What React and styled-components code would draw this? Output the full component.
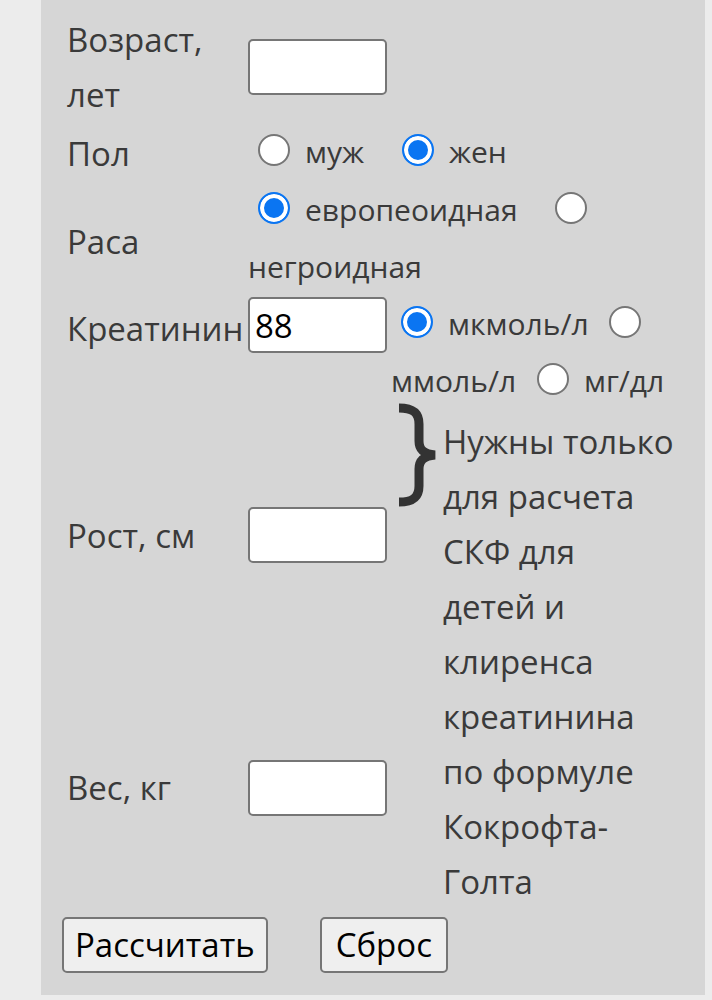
import React from "react";
import styled, { createGlobalStyle } from "styled-components";

const GlobalStyle = createGlobalStyle`
  html, body { margin: 0; padding: 0; background: #ececec; }
  body { font-family: "Open Sans", "Noto Sans", sans-serif; }
`;

const Page = styled.div`
  padding: 0 7px 5px 41px;
`;

const Panel = styled.form`
  background: #d6d6d6;
  padding: 12px 10px 22px 26px;
  color: #3a3a3a;
  font-size: 33px;
  line-height: 55px;
`;

const FormGrid = styled.div`
  display: grid;
  grid-template-columns: 177px 139px 1fr;
  grid-template-rows: auto auto auto auto 1fr 1fr;
  column-gap: 4px;
`;

const Label = styled.div`
  grid-column: 1;
  align-self: ${(p) => (p.$top ? "start" : "center")};
  margin-top: ${(p) => p.$mt || 0}px;
`;

const TextInput = styled.input`
  grid-column: 2;
  align-self: ${(p) => (p.$top ? "start" : "center")};
  margin-top: ${(p) => p.$mt || 0}px;
  box-sizing: border-box;
  width: 139px;
  height: 56px;
  border: 2px solid #767676;
  border-radius: 5px;
  background: #fff;
  padding: 0 5px;
  font-family: "Open Sans", sans-serif;
  font-size: 33px;
  color: #000;
  outline: none;
`;

const RadioCell = styled.div`
  grid-column: ${(p) => p.$col};
  align-self: ${(p) => (p.$top ? "start" : "center")};
  margin-top: ${(p) => p.$mt || 0}px;
  font-size: 30px;
  line-height: 57px;
`;

const Radio = styled.input.attrs({ type: "radio" })`
  appearance: none;
  -webkit-appearance: none;
  box-sizing: border-box;
  width: 32px;
  height: 32px;
  margin: 0 15px 0 ${(p) => p.$ml ?? 13}px;
  vertical-align: -3px;
  border-radius: 50%;
  border: 2px solid #767676;
  background: #fff;
  &:checked {
    border-color: #0a75f2;
    background: #0a75f2;
    box-shadow: inset 0 0 0 4px #fff;
  }
`;

const Note = styled.div`
  grid-column: 3;
  grid-row: 5 / span 2;
  display: flex;
  align-items: flex-start;
  margin-top: -6px;
  margin-bottom: 5px;
`;

const Brace = styled.svg`
  flex: none;
  margin-left: 7px;
  margin-right: 5px;
`;

const NoteText = styled.div`
  margin-top: 11px;
  width: 231px;
`;

const ButtonRow = styled.div`
  display: flex;
  gap: 52px;
  margin-left: -5px;
  margin-top: 3px;
`;

const Button = styled.button`
  box-sizing: border-box;
  height: 56px;
  padding: 0 ${(p) => p.$px}px;
  border: 2px solid #767676;
  border-radius: 5px;
  background: #efefef;
  color: #000;
  font-family: "Open Sans", sans-serif;
  font-size: 33px;
  line-height: 52px;
`;

export default function App() {
  return (
    <>
      <GlobalStyle />
      <Page>
        <Panel onSubmit={(e) => e.preventDefault()}>
          <FormGrid>
            <Label>Возраст, лет</Label>
            <TextInput type="text" defaultValue="" />

            <Label $mt={4}>Пол</Label>
            <RadioCell $col="2 / span 2">
              <Radio name="sex" $ml={10} />муж <Radio name="sex" $ml={30} defaultChecked />жен
            </RadioCell>

            <Label $mt={6}>Раса</Label>
            <RadioCell $col="2 / span 2">
              <Radio name="race" $ml={10} defaultChecked />европеоидная <Radio name="race" $ml={30} /> негроидная
            </RadioCell>

            <Label $top $mt={6}>Креатинин</Label>
            <TextInput $top $mt={2} type="text" defaultValue="88" />
            <RadioCell $col="3" $top>
              <Radio name="unit" $ml={10} defaultChecked />мкмоль/л <Radio name="unit" /> ммоль/л <Radio name="unit" />мг/дл
            </RadioCell>

            <Label>Рост, см</Label>
            <TextInput type="text" defaultValue="" />
            <Note>
              <Brace width="40" height="104" viewBox="0 0 40 104">
                <path
                  d="M1 5 C 14 5, 21 9, 21 21 L 21 38 C 21 47, 26 51, 37 52 C 26 53, 21 57, 21 66 L 21 83 C 21 95, 14 99, 1 99"
                  fill="none"
                  stroke="#333"
                  strokeWidth="9"
                />
              </Brace>
              <NoteText>
                Нужны только для расчета СКФ для детей и клиренса креатинина по формуле Кокрофта-Голта
              </NoteText>
            </Note>

            <Label>Вес, кг</Label>
            <TextInput type="text" defaultValue="" />
          </FormGrid>
          <ButtonRow>
            <Button type="submit" $px={11}>Рассчитать</Button>
            <Button type="reset" $px={14}>Сброс</Button>
          </ButtonRow>
        </Panel>
      </Page>
    </>
  );
}
